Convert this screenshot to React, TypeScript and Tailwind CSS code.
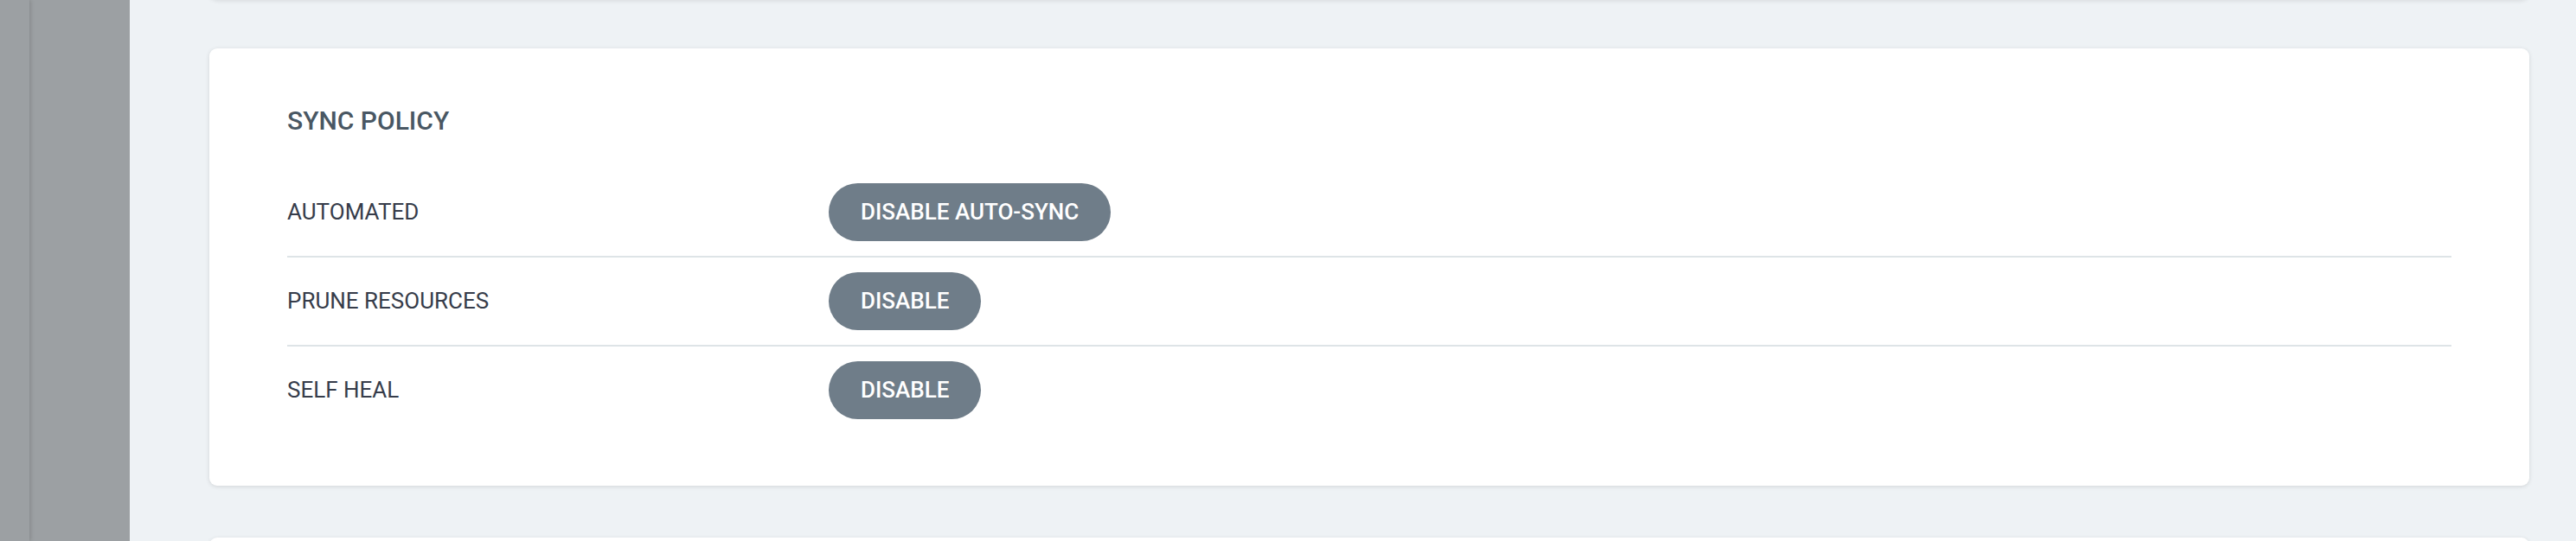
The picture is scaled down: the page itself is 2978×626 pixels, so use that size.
import React from 'react'

type PolicyRow = {
  label: string
  action: string
}

const rows: PolicyRow[] = [
  { label: 'AUTOMATED', action: 'DISABLE AUTO-SYNC' },
  { label: 'PRUNE RESOURCES', action: 'DISABLE' },
  { label: 'SELF HEAL', action: 'DISABLE' },
]

const App = () => {
  return (
    <div className="flex h-[626px] w-full overflow-hidden bg-[#eef2f5] font-['Roboto',sans-serif]">
      {/* dimmed side nav */}
      <div className="flex h-full w-[150px] shrink-0 bg-[#9ca0a3]">
        <div className="h-full w-[34px] bg-[#9ca0a3] shadow-[2px_0_4px_rgba(0,0,0,0.12)]"></div>
      </div>

      <div className="flex min-w-0 flex-1 flex-col pl-[92px] pr-[54px]">
        {/* card above, mostly scrolled out */}
        <div className="-mt-[60px] h-[60px] shrink-0 rounded-[9px] bg-white shadow-[0_1px_5px_rgba(0,0,0,0.1)]"></div>

        <div className="mt-[56px] shrink-0 rounded-[9px] bg-white px-[90px] pt-[66px] pb-[60px] shadow-[0_1px_5px_rgba(0,0,0,0.12)]">
          <h3 className="text-[30px] leading-[35px] font-medium text-[#495763]">SYNC POLICY</h3>

          <div className="mt-[38px] flex flex-col">
            {rows.map((row, index) => (
              <div
                key={index + 'row'}
                className={
                  index < rows.length - 1
                    ? 'flex items-center border-b-2 border-[#dee4e7] py-[17px]'
                    : 'flex items-center py-[17px]'
                }
              >
                <div className="w-[626px] shrink-0 text-[26px] text-[#363c4a]">{row.label}</div>
                <button className="h-[67px] rounded-full bg-[#6f7d89] px-[37px] text-[26px] font-medium text-white">
                  {row.action}
                </button>
              </div>
            ))}
          </div>
        </div>

        {/* next card peeking in */}
        <div className="mt-[60px] h-[120px] shrink-0 rounded-[9px] bg-white shadow-[0_1px_5px_rgba(0,0,0,0.1)]"></div>
      </div>
    </div>
  )
}

export default App
